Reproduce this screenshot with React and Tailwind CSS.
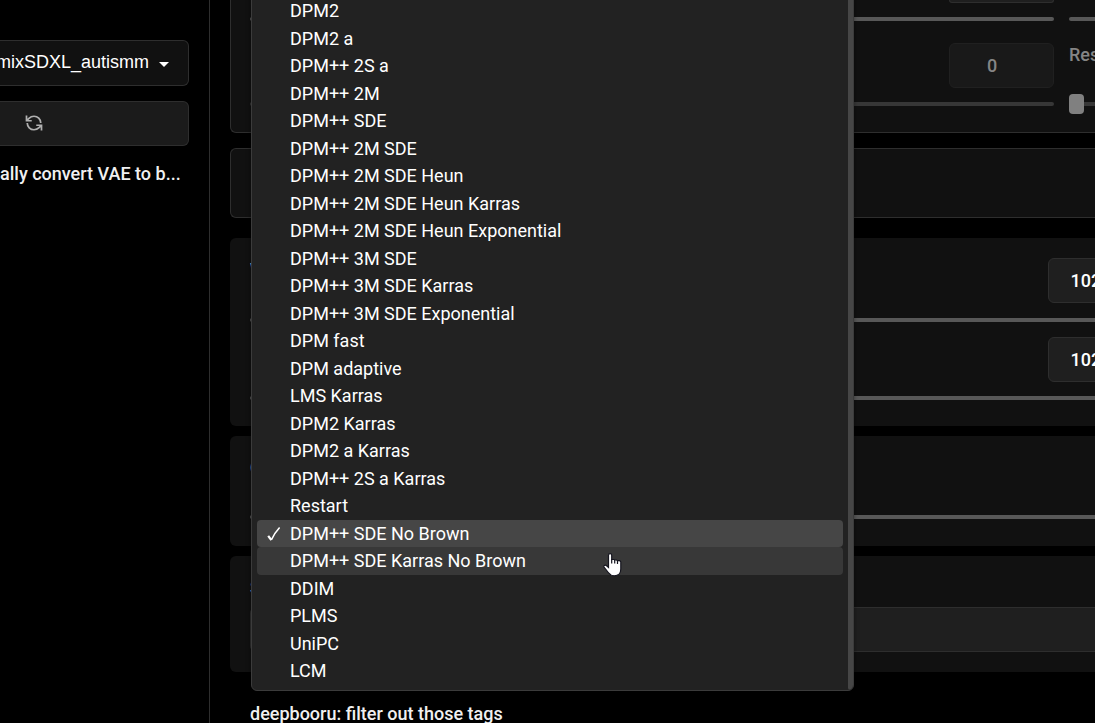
const samplers = [
  "DPM2", "DPM2 a", "DPM++ 2S a", "DPM++ 2M", "DPM++ SDE", "DPM++ 2M SDE",
  "DPM++ 2M SDE Heun", "DPM++ 2M SDE Heun Karras", "DPM++ 2M SDE Heun Exponential",
  "DPM++ 3M SDE", "DPM++ 3M SDE Karras", "DPM++ 3M SDE Exponential", "DPM fast",
  "DPM adaptive", "LMS Karras", "DPM2 Karras", "DPM2 a Karras", "DPM++ 2S a Karras",
  "Restart", "DPM++ SDE No Brown", "DPM++ SDE Karras No Brown", "DDIM", "PLMS", "UniPC", "LCM",
];

const thumb =
  "[&::-webkit-slider-thumb]:appearance-none [&::-webkit-slider-thumb]:h-5 [&::-webkit-slider-thumb]:w-[15px] [&::-webkit-slider-thumb]:rounded [&::-webkit-slider-thumb]:bg-white";

function Slider({ label, value = 0, disabled = false }) {
  return (
    <input
      type="range"
      aria-label={label}
      defaultValue={value}
      disabled={disabled}
      className={`block h-1 w-full appearance-none rounded-sm ${disabled ? "bg-[#373737]" : "bg-[#585858]"} ${thumb} disabled:[&::-webkit-slider-thumb]:bg-[#808080]`}
    />
  );
}

function NumberBox({ label, value, disabled = false }) {
  return (
    <input
      type="text"
      inputMode="numeric"
      aria-label={label}
      defaultValue={value}
      disabled={disabled}
      className={`h-[45px] w-[105px] shrink-0 rounded-md border pr-[19px] text-center font-medium ${disabled ? "border-[#202020] bg-[#191919] pl-0 text-[#858585]" : "border-[#2e2e2e] bg-[#1f1f1f] text-white"}`}
    />
  );
}

function Dropdown() {
  return (
    <div className="absolute -top-[9px] left-[251px] flex w-[603px] overflow-hidden rounded-md border border-[#3b3b3b] bg-[#222] font-normal text-white shadow-md shadow-black/40">
      <ul role="listbox" aria-label="Sampling method" className="flex-1 p-[5px]">
        {samplers.map((name, i) => (
          <li
            key={name}
            role="option"
            aria-selected={i === 19}
            className={`flex items-center rounded odd:h-7 even:h-[27px] ${i === 19 ? "bg-[#464646]" : i === 20 ? "bg-[#383838]" : ""}`}
          >
            <span className="flex w-[33px] justify-center">
              {i === 19 && (
                <svg width="14" height="16" viewBox="0 0 14 16" fill="none" stroke="white" aria-hidden="true">
                  <path d="M1.200 9.800 4.300 14" strokeWidth="2.200" />
                  <path d="M4.300 14Q7.500 7 12.600 1.500" strokeWidth="1.600" />
                </svg>
              )}
            </span>
            {name}
          </li>
        ))}
      </ul>
      <div className="w-[5px] rounded bg-[#464646]" />
    </div>
  );
}

export default function App() {
  return (
    <div className="relative flex h-screen overflow-hidden bg-black font-['Roboto',sans-serif] text-[18px] leading-6 font-medium text-[#f0f0f0]">
      <aside className="flex w-[210px] shrink-0 flex-col border-r border-[#2e2e2e] pt-10 pr-5">
        <div className="relative -ml-1">
          <select
            aria-label="Checkpoint"
            className="h-[46px] w-full appearance-none rounded-r-md border border-l-0 border-[#2e2e2e] bg-[#111] pb-[2px] font-['Liberation_Sans',sans-serif] text-[18px] font-normal text-white"
          >
            <option>mixSDXL_autismm</option>
          </select>
          <svg className="pointer-events-none absolute top-[22px] right-5" width="10" height="5" viewBox="0 0 10 5" fill="white" aria-hidden="true">
            <path d="M0 0h10L5 5z" />
          </svg>
        </div>
        <button
          type="button"
          aria-label="Refresh"
          className="mt-[15px] flex h-[45px] items-center rounded-r-md border border-l-0 border-[#2e2e2e] bg-[#1b1b1b] pb-[2px] pl-[25px] text-[#b0b0b0]"
        >
          <svg width="18" height="18" viewBox="0 0 24 24" fill="none" stroke="currentColor" strokeWidth="2.300" aria-hidden="true">
            <path d="M21 12a9 9 0 0 0-9-9 9.75 9.75 0 0 0-6.740 2.740L2 9M2 2v7h7M3 12a9 9 0 0 0 9 9 9.750 9.750 0 0 0 6.740-2.740L22 15M15 15h7v7" />
          </svg>
        </button>
        <p className="mt-4 whitespace-nowrap">ally convert VAE to b...</p>
      </aside>

      <main className="min-w-0 flex-1 overflow-hidden pl-5">
        <section className="flex gap-[15px] rounded-bl-md border-b border-l border-[#2e2e2e] bg-[#111] pb-[26px] pl-[19px]">
          <div className="w-[804px] shrink-0">
            <div className="ml-auto h-[3px] w-[105px] rounded-b-md border border-t-0 border-[#2e2e2e] bg-[#1f1f1f]" />
            <div className="mt-[14px]"><Slider label="Hires upscale" value={30} /></div>
            <div className="mt-[22px] mb-[14px] flex justify-end"><NumberBox label="Resize width" value="0" disabled /></div>
            <Slider label="Resize width slider" value={30} disabled />
          </div>
          <div className="w-[804px] shrink-0">
            <div className="mt-[17px]"><Slider label="Denoising strength" value={50} /></div>
            <div className="mt-[22px] mb-[14px] h-[45px] text-[#858585]">Res</div>
            <Slider label="Resize height" disabled />
          </div>
        </section>

        <section className="mt-[15px] h-[70px] rounded-l-md border border-r-0 border-[#2e2e2e] bg-[#111]" />

        <section className="mt-5 rounded-l-md bg-[#111] pt-5 pb-[26px] pl-5">
          <div className="w-[903px]">
            <div className="flex items-start justify-between"><span>W</span><NumberBox label="Width" value="1024" /></div>
            <div className="my-[15px]"><Slider label="Width slider" value={20} /></div>
            <div className="mb-[14px] flex justify-end"><NumberBox label="Height" value="1024" /></div>
            <Slider label="Height slider" value={20} />
          </div>
        </section>

        <section className="mt-[10px] rounded-l-md bg-[#111] pt-5 pb-[27px] pl-5">
          <div className="w-[903px]">
            <div className="mb-[35px]">C</div>
            <Slider label="CFG scale" value={20} />
          </div>
        </section>

        <section className="mt-[10px] rounded-l-md bg-[#111] pt-5 pb-5 pl-5">
          <label htmlFor="seed" className="mb-[7px] block">S</label>
          <input id="seed" type="text" className="block h-[45px] w-full rounded-l-md border border-r-0 border-[#2e2e2e] bg-[#1f1f1f]" />
        </section>

        <p className="mt-[30px] pl-5 whitespace-nowrap">deepbooru: filter out those tags</p>
      </main>

      <Dropdown />

      <svg className="pointer-events-none absolute top-[553px] left-[603px]" width="19" height="24" viewBox="0 0 19 24" fill="white" stroke="#15151f" strokeWidth="1.2" aria-hidden="true">
        <path d="M5.500 14.500V2.200a1.600 1.600 0 0 1 3.200 0V6.500h2.500l.5.500h2l.6.600h2.500L17.800 9v7c0 4-2.500 6.800-6.500 6.800-3 0-4.500-1.300-6-3.300L1 14c-.6-1.300 1-2.500 2.300-1.500z" />
        <path d="M8.700 6v4.500M11.700 7v3.500M14.500 8v3" fill="none" />
      </svg>
    </div>
  );
}
